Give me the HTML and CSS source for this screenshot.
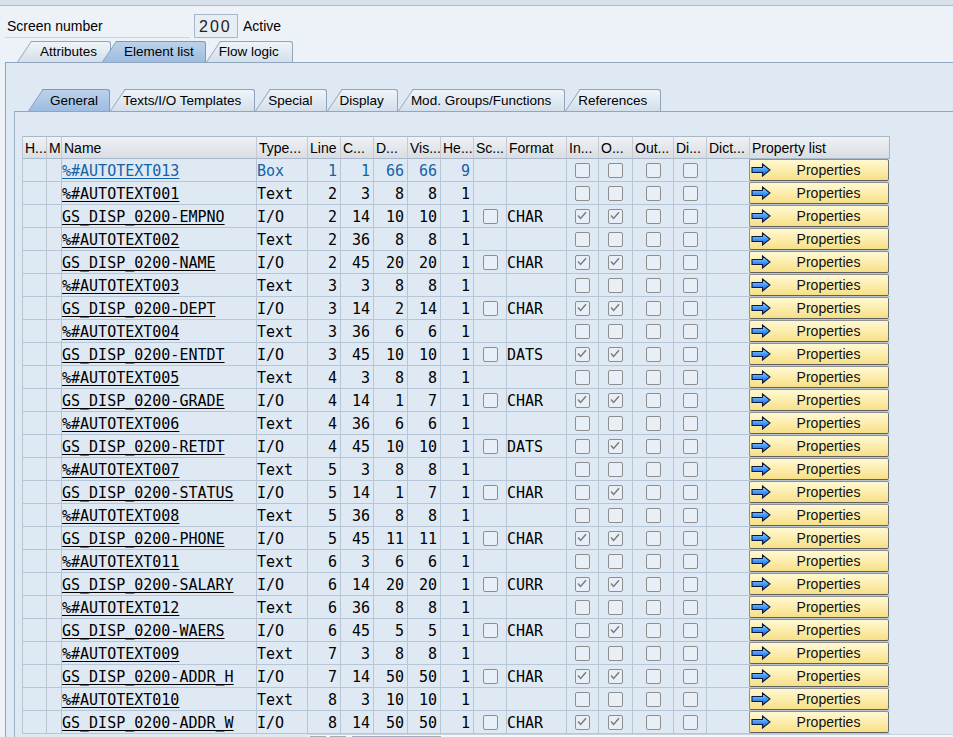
FILE: index.html
```html
<!DOCTYPE html>
<html lang="en">
<head>
<meta charset="utf-8">
<title>Screen 200 - Element list</title>
<link rel="stylesheet" href="styles.css">
</head>
<body>
<svg class="defs" width="0" height="0" aria-hidden="true">
  <defs>
    <linearGradient id="arrfill" x1="0" y1="0" x2="0" y2="1">
      <stop offset="0" stop-color="#bfe4ff"/>
      <stop offset="0.45" stop-color="#4aa0ff"/>
      <stop offset="1" stop-color="#1556d0"/>
    </linearGradient>
    <symbol id="arr" viewBox="0 0 20 14">
      <path d="M1 4.5 H11.5 V1 L19 7 L11.5 13 V9.5 H1 Z" fill="url(#arrfill)" stroke="#0b1a3a" stroke-width="1.1" stroke-linejoin="miter"/>
    </symbol>
  </defs>
</svg>

<div class="topbar"></div>

<div class="screen-row">
  <span class="label">Screen number</span>
  <span class="field">200</span>
  <span class="status">Active</span>
</div>

<div class="tabs main-tabs">
  <div class="tab">Attributes</div>
  <div class="tab sel">Element list</div>
  <div class="tab">Flow logic</div>
</div>

<div class="panel outer">
  <div class="tabs inner-tabs">
    <div class="tab sel">General</div>
    <div class="tab">Texts/I/O Templates</div>
    <div class="tab">Special</div>
    <div class="tab">Display</div>
    <div class="tab">Mod. Groups/Functions</div>
    <div class="tab">References</div>
  </div>

  <div class="panel inner">
    <div class="grid">
      <div class="row head">
        <div class="c">H...</div><div class="c">M</div><div class="c">Name</div><div class="c">Type...</div>
        <div class="c">Line</div><div class="c">C...</div><div class="c">D...</div><div class="c">Vis...</div>
        <div class="c">He...</div><div class="c">Sc...</div><div class="c">Format</div><div class="c">In...</div>
        <div class="c">O...</div><div class="c">Out...</div><div class="c">Di...</div><div class="c">Dict...</div>
        <div class="c">Property list</div>
      </div>

      <!-- 1 -->
      <div class="row blue">
        <div class="c"></div><div class="c"></div><div class="c mono"><span class="lnk">%#AUTOTEXT013</span></div><div class="c mono">Box</div>
        <div class="c num">1</div><div class="c num">1</div><div class="c num">66</div><div class="c num">66</div><div class="c num">9</div>
        <div class="c"></div><div class="c mono"></div>
        <div class="c ck"><i class="cb"></i></div><div class="c ck"><i class="cb"></i></div><div class="c ck"><i class="cb"></i></div><div class="c ck"><i class="cb"></i></div>
        <div class="c"></div>
        <div class="c prop"><div class="btn"><svg class="arrow"><use href="#arr"/></svg><span>Properties</span></div></div>
      </div>
      <!-- 2 -->
      <div class="row">
        <div class="c"></div><div class="c"></div><div class="c mono"><span class="lnk">%#AUTOTEXT001</span></div><div class="c mono">Text</div>
        <div class="c num">2</div><div class="c num">3</div><div class="c num">8</div><div class="c num">8</div><div class="c num">1</div>
        <div class="c"></div><div class="c mono"></div>
        <div class="c ck"><i class="cb"></i></div><div class="c ck"><i class="cb"></i></div><div class="c ck"><i class="cb"></i></div><div class="c ck"><i class="cb"></i></div>
        <div class="c"></div>
        <div class="c prop"><div class="btn"><svg class="arrow"><use href="#arr"/></svg><span>Properties</span></div></div>
      </div>
      <!-- 3 -->
      <div class="row">
        <div class="c"></div><div class="c"></div><div class="c mono"><span class="lnk">GS_DISP_0200-EMPNO</span></div><div class="c mono">I/O</div>
        <div class="c num">2</div><div class="c num">14</div><div class="c num">10</div><div class="c num">10</div><div class="c num">1</div>
        <div class="c ck"><i class="cb"></i></div><div class="c mono">CHAR</div>
        <div class="c ck"><i class="cb"><svg viewBox="0 0 13 13"><path d="M2 5.5 4.6 8.4 10 2.3"/></svg></i></div><div class="c ck"><i class="cb"><svg viewBox="0 0 13 13"><path d="M2 5.5 4.6 8.4 10 2.3"/></svg></i></div><div class="c ck"><i class="cb"></i></div><div class="c ck"><i class="cb"></i></div>
        <div class="c"></div>
        <div class="c prop"><div class="btn"><svg class="arrow"><use href="#arr"/></svg><span>Properties</span></div></div>
      </div>
      <!-- 4 -->
      <div class="row">
        <div class="c"></div><div class="c"></div><div class="c mono"><span class="lnk">%#AUTOTEXT002</span></div><div class="c mono">Text</div>
        <div class="c num">2</div><div class="c num">36</div><div class="c num">8</div><div class="c num">8</div><div class="c num">1</div>
        <div class="c"></div><div class="c mono"></div>
        <div class="c ck"><i class="cb"></i></div><div class="c ck"><i class="cb"></i></div><div class="c ck"><i class="cb"></i></div><div class="c ck"><i class="cb"></i></div>
        <div class="c"></div>
        <div class="c prop"><div class="btn"><svg class="arrow"><use href="#arr"/></svg><span>Properties</span></div></div>
      </div>
      <!-- 5 -->
      <div class="row">
        <div class="c"></div><div class="c"></div><div class="c mono"><span class="lnk">GS_DISP_0200-NAME</span></div><div class="c mono">I/O</div>
        <div class="c num">2</div><div class="c num">45</div><div class="c num">20</div><div class="c num">20</div><div class="c num">1</div>
        <div class="c ck"><i class="cb"></i></div><div class="c mono">CHAR</div>
        <div class="c ck"><i class="cb"><svg viewBox="0 0 13 13"><path d="M2 5.5 4.6 8.4 10 2.3"/></svg></i></div><div class="c ck"><i class="cb"><svg viewBox="0 0 13 13"><path d="M2 5.5 4.6 8.4 10 2.3"/></svg></i></div><div class="c ck"><i class="cb"></i></div><div class="c ck"><i class="cb"></i></div>
        <div class="c"></div>
        <div class="c prop"><div class="btn"><svg class="arrow"><use href="#arr"/></svg><span>Properties</span></div></div>
      </div>
      <!-- 6 -->
      <div class="row">
        <div class="c"></div><div class="c"></div><div class="c mono"><span class="lnk">%#AUTOTEXT003</span></div><div class="c mono">Text</div>
        <div class="c num">3</div><div class="c num">3</div><div class="c num">8</div><div class="c num">8</div><div class="c num">1</div>
        <div class="c"></div><div class="c mono"></div>
        <div class="c ck"><i class="cb"></i></div><div class="c ck"><i class="cb"></i></div><div class="c ck"><i class="cb"></i></div><div class="c ck"><i class="cb"></i></div>
        <div class="c"></div>
        <div class="c prop"><div class="btn"><svg class="arrow"><use href="#arr"/></svg><span>Properties</span></div></div>
      </div>
      <!-- 7 -->
      <div class="row">
        <div class="c"></div><div class="c"></div><div class="c mono"><span class="lnk">GS_DISP_0200-DEPT</span></div><div class="c mono">I/O</div>
        <div class="c num">3</div><div class="c num">14</div><div class="c num">2</div><div class="c num">14</div><div class="c num">1</div>
        <div class="c ck"><i class="cb"></i></div><div class="c mono">CHAR</div>
        <div class="c ck"><i class="cb"><svg viewBox="0 0 13 13"><path d="M2 5.5 4.6 8.4 10 2.3"/></svg></i></div><div class="c ck"><i class="cb"><svg viewBox="0 0 13 13"><path d="M2 5.5 4.6 8.4 10 2.3"/></svg></i></div><div class="c ck"><i class="cb"></i></div><div class="c ck"><i class="cb"></i></div>
        <div class="c"></div>
        <div class="c prop"><div class="btn"><svg class="arrow"><use href="#arr"/></svg><span>Properties</span></div></div>
      </div>
      <!-- 8 -->
      <div class="row">
        <div class="c"></div><div class="c"></div><div class="c mono"><span class="lnk">%#AUTOTEXT004</span></div><div class="c mono">Text</div>
        <div class="c num">3</div><div class="c num">36</div><div class="c num">6</div><div class="c num">6</div><div class="c num">1</div>
        <div class="c"></div><div class="c mono"></div>
        <div class="c ck"><i class="cb"></i></div><div class="c ck"><i class="cb"></i></div><div class="c ck"><i class="cb"></i></div><div class="c ck"><i class="cb"></i></div>
        <div class="c"></div>
        <div class="c prop"><div class="btn"><svg class="arrow"><use href="#arr"/></svg><span>Properties</span></div></div>
      </div>
      <!-- 9 -->
      <div class="row">
        <div class="c"></div><div class="c"></div><div class="c mono"><span class="lnk">GS_DISP_0200-ENTDT</span></div><div class="c mono">I/O</div>
        <div class="c num">3</div><div class="c num">45</div><div class="c num">10</div><div class="c num">10</div><div class="c num">1</div>
        <div class="c ck"><i class="cb"></i></div><div class="c mono">DATS</div>
        <div class="c ck"><i class="cb"><svg viewBox="0 0 13 13"><path d="M2 5.5 4.6 8.4 10 2.3"/></svg></i></div><div class="c ck"><i class="cb"><svg viewBox="0 0 13 13"><path d="M2 5.5 4.6 8.4 10 2.3"/></svg></i></div><div class="c ck"><i class="cb"></i></div><div class="c ck"><i class="cb"></i></div>
        <div class="c"></div>
        <div class="c prop"><div class="btn"><svg class="arrow"><use href="#arr"/></svg><span>Properties</span></div></div>
      </div>
      <!-- 10 -->
      <div class="row">
        <div class="c"></div><div class="c"></div><div class="c mono"><span class="lnk">%#AUTOTEXT005</span></div><div class="c mono">Text</div>
        <div class="c num">4</div><div class="c num">3</div><div class="c num">8</div><div class="c num">8</div><div class="c num">1</div>
        <div class="c"></div><div class="c mono"></div>
        <div class="c ck"><i class="cb"></i></div><div class="c ck"><i class="cb"></i></div><div class="c ck"><i class="cb"></i></div><div class="c ck"><i class="cb"></i></div>
        <div class="c"></div>
        <div class="c prop"><div class="btn"><svg class="arrow"><use href="#arr"/></svg><span>Properties</span></div></div>
      </div>
      <!-- 11 -->
      <div class="row">
        <div class="c"></div><div class="c"></div><div class="c mono"><span class="lnk">GS_DISP_0200-GRADE</span></div><div class="c mono">I/O</div>
        <div class="c num">4</div><div class="c num">14</div><div class="c num">1</div><div class="c num">7</div><div class="c num">1</div>
        <div class="c ck"><i class="cb"></i></div><div class="c mono">CHAR</div>
        <div class="c ck"><i class="cb"><svg viewBox="0 0 13 13"><path d="M2 5.5 4.6 8.4 10 2.3"/></svg></i></div><div class="c ck"><i class="cb"><svg viewBox="0 0 13 13"><path d="M2 5.5 4.6 8.4 10 2.3"/></svg></i></div><div class="c ck"><i class="cb"></i></div><div class="c ck"><i class="cb"></i></div>
        <div class="c"></div>
        <div class="c prop"><div class="btn"><svg class="arrow"><use href="#arr"/></svg><span>Properties</span></div></div>
      </div>
      <!-- 12 -->
      <div class="row">
        <div class="c"></div><div class="c"></div><div class="c mono"><span class="lnk">%#AUTOTEXT006</span></div><div class="c mono">Text</div>
        <div class="c num">4</div><div class="c num">36</div><div class="c num">6</div><div class="c num">6</div><div class="c num">1</div>
        <div class="c"></div><div class="c mono"></div>
        <div class="c ck"><i class="cb"></i></div><div class="c ck"><i class="cb"></i></div><div class="c ck"><i class="cb"></i></div><div class="c ck"><i class="cb"></i></div>
        <div class="c"></div>
        <div class="c prop"><div class="btn"><svg class="arrow"><use href="#arr"/></svg><span>Properties</span></div></div>
      </div>
      <!-- 13 -->
      <div class="row">
        <div class="c"></div><div class="c"></div><div class="c mono"><span class="lnk">GS_DISP_0200-RETDT</span></div><div class="c mono">I/O</div>
        <div class="c num">4</div><div class="c num">45</div><div class="c num">10</div><div class="c num">10</div><div class="c num">1</div>
        <div class="c ck"><i class="cb"></i></div><div class="c mono">DATS</div>
        <div class="c ck"><i class="cb"></i></div><div class="c ck"><i class="cb"><svg viewBox="0 0 13 13"><path d="M2 5.5 4.6 8.4 10 2.3"/></svg></i></div><div class="c ck"><i class="cb"></i></div><div class="c ck"><i class="cb"></i></div>
        <div class="c"></div>
        <div class="c prop"><div class="btn"><svg class="arrow"><use href="#arr"/></svg><span>Properties</span></div></div>
      </div>
      <!-- 14 -->
      <div class="row">
        <div class="c"></div><div class="c"></div><div class="c mono"><span class="lnk">%#AUTOTEXT007</span></div><div class="c mono">Text</div>
        <div class="c num">5</div><div class="c num">3</div><div class="c num">8</div><div class="c num">8</div><div class="c num">1</div>
        <div class="c"></div><div class="c mono"></div>
        <div class="c ck"><i class="cb"></i></div><div class="c ck"><i class="cb"></i></div><div class="c ck"><i class="cb"></i></div><div class="c ck"><i class="cb"></i></div>
        <div class="c"></div>
        <div class="c prop"><div class="btn"><svg class="arrow"><use href="#arr"/></svg><span>Properties</span></div></div>
      </div>
      <!-- 15 -->
      <div class="row">
        <div class="c"></div><div class="c"></div><div class="c mono"><span class="lnk">GS_DISP_0200-STATUS</span></div><div class="c mono">I/O</div>
        <div class="c num">5</div><div class="c num">14</div><div class="c num">1</div><div class="c num">7</div><div class="c num">1</div>
        <div class="c ck"><i class="cb"></i></div><div class="c mono">CHAR</div>
        <div class="c ck"><i class="cb"></i></div><div class="c ck"><i class="cb"><svg viewBox="0 0 13 13"><path d="M2 5.5 4.6 8.4 10 2.3"/></svg></i></div><div class="c ck"><i class="cb"></i></div><div class="c ck"><i class="cb"></i></div>
        <div class="c"></div>
        <div class="c prop"><div class="btn"><svg class="arrow"><use href="#arr"/></svg><span>Properties</span></div></div>
      </div>
      <!-- 16 -->
      <div class="row">
        <div class="c"></div><div class="c"></div><div class="c mono"><span class="lnk">%#AUTOTEXT008</span></div><div class="c mono">Text</div>
        <div class="c num">5</div><div class="c num">36</div><div class="c num">8</div><div class="c num">8</div><div class="c num">1</div>
        <div class="c"></div><div class="c mono"></div>
        <div class="c ck"><i class="cb"></i></div><div class="c ck"><i class="cb"></i></div><div class="c ck"><i class="cb"></i></div><div class="c ck"><i class="cb"></i></div>
        <div class="c"></div>
        <div class="c prop"><div class="btn"><svg class="arrow"><use href="#arr"/></svg><span>Properties</span></div></div>
      </div>
      <!-- 17 -->
      <div class="row">
        <div class="c"></div><div class="c"></div><div class="c mono"><span class="lnk">GS_DISP_0200-PHONE</span></div><div class="c mono">I/O</div>
        <div class="c num">5</div><div class="c num">45</div><div class="c num">11</div><div class="c num">11</div><div class="c num">1</div>
        <div class="c ck"><i class="cb"></i></div><div class="c mono">CHAR</div>
        <div class="c ck"><i class="cb"><svg viewBox="0 0 13 13"><path d="M2 5.5 4.6 8.4 10 2.3"/></svg></i></div><div class="c ck"><i class="cb"><svg viewBox="0 0 13 13"><path d="M2 5.5 4.6 8.4 10 2.3"/></svg></i></div><div class="c ck"><i class="cb"></i></div><div class="c ck"><i class="cb"></i></div>
        <div class="c"></div>
        <div class="c prop"><div class="btn"><svg class="arrow"><use href="#arr"/></svg><span>Properties</span></div></div>
      </div>
      <!-- 18 -->
      <div class="row">
        <div class="c"></div><div class="c"></div><div class="c mono"><span class="lnk">%#AUTOTEXT011</span></div><div class="c mono">Text</div>
        <div class="c num">6</div><div class="c num">3</div><div class="c num">6</div><div class="c num">6</div><div class="c num">1</div>
        <div class="c"></div><div class="c mono"></div>
        <div class="c ck"><i class="cb"></i></div><div class="c ck"><i class="cb"></i></div><div class="c ck"><i class="cb"></i></div><div class="c ck"><i class="cb"></i></div>
        <div class="c"></div>
        <div class="c prop"><div class="btn"><svg class="arrow"><use href="#arr"/></svg><span>Properties</span></div></div>
      </div>
      <!-- 19 -->
      <div class="row">
        <div class="c"></div><div class="c"></div><div class="c mono"><span class="lnk">GS_DISP_0200-SALARY</span></div><div class="c mono">I/O</div>
        <div class="c num">6</div><div class="c num">14</div><div class="c num">20</div><div class="c num">20</div><div class="c num">1</div>
        <div class="c ck"><i class="cb"></i></div><div class="c mono">CURR</div>
        <div class="c ck"><i class="cb"><svg viewBox="0 0 13 13"><path d="M2 5.5 4.6 8.4 10 2.3"/></svg></i></div><div class="c ck"><i class="cb"><svg viewBox="0 0 13 13"><path d="M2 5.5 4.6 8.4 10 2.3"/></svg></i></div><div class="c ck"><i class="cb"></i></div><div class="c ck"><i class="cb"></i></div>
        <div class="c"></div>
        <div class="c prop"><div class="btn"><svg class="arrow"><use href="#arr"/></svg><span>Properties</span></div></div>
      </div>
      <!-- 20 -->
      <div class="row">
        <div class="c"></div><div class="c"></div><div class="c mono"><span class="lnk">%#AUTOTEXT012</span></div><div class="c mono">Text</div>
        <div class="c num">6</div><div class="c num">36</div><div class="c num">8</div><div class="c num">8</div><div class="c num">1</div>
        <div class="c"></div><div class="c mono"></div>
        <div class="c ck"><i class="cb"></i></div><div class="c ck"><i class="cb"></i></div><div class="c ck"><i class="cb"></i></div><div class="c ck"><i class="cb"></i></div>
        <div class="c"></div>
        <div class="c prop"><div class="btn"><svg class="arrow"><use href="#arr"/></svg><span>Properties</span></div></div>
      </div>
      <!-- 21 -->
      <div class="row">
        <div class="c"></div><div class="c"></div><div class="c mono"><span class="lnk">GS_DISP_0200-WAERS</span></div><div class="c mono">I/O</div>
        <div class="c num">6</div><div class="c num">45</div><div class="c num">5</div><div class="c num">5</div><div class="c num">1</div>
        <div class="c ck"><i class="cb"></i></div><div class="c mono">CHAR</div>
        <div class="c ck"><i class="cb"></i></div><div class="c ck"><i class="cb"><svg viewBox="0 0 13 13"><path d="M2 5.5 4.6 8.4 10 2.3"/></svg></i></div><div class="c ck"><i class="cb"></i></div><div class="c ck"><i class="cb"></i></div>
        <div class="c"></div>
        <div class="c prop"><div class="btn"><svg class="arrow"><use href="#arr"/></svg><span>Properties</span></div></div>
      </div>
      <!-- 22 -->
      <div class="row">
        <div class="c"></div><div class="c"></div><div class="c mono"><span class="lnk">%#AUTOTEXT009</span></div><div class="c mono">Text</div>
        <div class="c num">7</div><div class="c num">3</div><div class="c num">8</div><div class="c num">8</div><div class="c num">1</div>
        <div class="c"></div><div class="c mono"></div>
        <div class="c ck"><i class="cb"></i></div><div class="c ck"><i class="cb"></i></div><div class="c ck"><i class="cb"></i></div><div class="c ck"><i class="cb"></i></div>
        <div class="c"></div>
        <div class="c prop"><div class="btn"><svg class="arrow"><use href="#arr"/></svg><span>Properties</span></div></div>
      </div>
      <!-- 23 -->
      <div class="row">
        <div class="c"></div><div class="c"></div><div class="c mono"><span class="lnk">GS_DISP_0200-ADDR_H</span></div><div class="c mono">I/O</div>
        <div class="c num">7</div><div class="c num">14</div><div class="c num">50</div><div class="c num">50</div><div class="c num">1</div>
        <div class="c ck"><i class="cb"></i></div><div class="c mono">CHAR</div>
        <div class="c ck"><i class="cb"><svg viewBox="0 0 13 13"><path d="M2 5.5 4.6 8.4 10 2.3"/></svg></i></div><div class="c ck"><i class="cb"><svg viewBox="0 0 13 13"><path d="M2 5.5 4.6 8.4 10 2.3"/></svg></i></div><div class="c ck"><i class="cb"></i></div><div class="c ck"><i class="cb"></i></div>
        <div class="c"></div>
        <div class="c prop"><div class="btn"><svg class="arrow"><use href="#arr"/></svg><span>Properties</span></div></div>
      </div>
      <!-- 24 -->
      <div class="row">
        <div class="c"></div><div class="c"></div><div class="c mono"><span class="lnk">%#AUTOTEXT010</span></div><div class="c mono">Text</div>
        <div class="c num">8</div><div class="c num">3</div><div class="c num">10</div><div class="c num">10</div><div class="c num">1</div>
        <div class="c"></div><div class="c mono"></div>
        <div class="c ck"><i class="cb"></i></div><div class="c ck"><i class="cb"></i></div><div class="c ck"><i class="cb"></i></div><div class="c ck"><i class="cb"></i></div>
        <div class="c"></div>
        <div class="c prop"><div class="btn"><svg class="arrow"><use href="#arr"/></svg><span>Properties</span></div></div>
      </div>
      <!-- 25 -->
      <div class="row">
        <div class="c"></div><div class="c"></div><div class="c mono"><span class="lnk">GS_DISP_0200-ADDR_W</span></div><div class="c mono">I/O</div>
        <div class="c num">8</div><div class="c num">14</div><div class="c num">50</div><div class="c num">50</div><div class="c num">1</div>
        <div class="c ck"><i class="cb"></i></div><div class="c mono">CHAR</div>
        <div class="c ck"><i class="cb"><svg viewBox="0 0 13 13"><path d="M2 5.5 4.6 8.4 10 2.3"/></svg></i></div><div class="c ck"><i class="cb"><svg viewBox="0 0 13 13"><path d="M2 5.5 4.6 8.4 10 2.3"/></svg></i></div><div class="c ck"><i class="cb"></i></div><div class="c ck"><i class="cb"></i></div>
        <div class="c"></div>
        <div class="c prop"><div class="btn"><svg class="arrow"><use href="#arr"/></svg><span>Properties</span></div></div>
      </div>
    </div>

    <div class="toolbar">
      <span class="tb tb1"></span><span class="tb tb2"></span><span class="tb tb3"></span>
    </div>
  </div>
</div>
</body>
</html>
```

FILE: styles.css
```css
* { box-sizing: border-box; }

html, body {
  margin: 0;
  height: 100%;
}

body {
  background: #edf2f8;
  font-family: "Liberation Sans", Arial, sans-serif;
  font-size: 13.5px;
  color: #000;
  overflow: hidden;
}

.defs {
  position: absolute;
  width: 0;
  height: 0;
  overflow: hidden;
}

.topbar {
  height: 6px;
  background: #d9e2eb;
  border-bottom: 1px solid #aebdcc;
}

/* Screen number row */
.screen-row {
  display: flex;
  margin-top: 8px;
  height: 24px;
  font-size: 14px;
}

.label {
  margin-left: 5px;
  width: 185px;
  padding-left: 2px;
  line-height: 25px;
  border-bottom: 1px solid #cbd5df;
}

.field {
  margin-left: 4px;
  width: 44px;
  height: 24px;
  border: 1px solid #a9b6c3;
  background: #e6edf4;
  font-size: 16px;
  letter-spacing: 2px;
  padding-left: 4px;
  line-height: 23px;
  color: #222;
}

.status {
  margin-left: 5px;
  line-height: 25px;
}

/* Tabs */
.tabs {
  display: flex;
  height: 21px;
}

.main-tabs {
  margin-top: 3px;
  padding-left: 17px;
}

.inner-tabs {
  margin-top: 26px;
  padding-left: 31px;
  height: 22px;
}

.tab {
  position: relative;
  z-index: 0;
  height: 100%;
  line-height: 23px;
  padding: 0 14px 0 13px;
  white-space: nowrap;
  font-size: 13.5px;
  --bg: linear-gradient(#eff4f9, #d3dfeb);
  --bd: #8ea5bd;
}

.main-tabs .tab { line-height: 22px; }

.tab:first-child { padding-left: 23px; }

.tab.sel {
  padding-left: 22px;
  padding-right: 12px;
  margin-left: -9px;
  z-index: 1;
  --bg: linear-gradient(#bcd2eb, #9dbce0);
  --bd: #7d9aba;
}

.tab::before,
.tab::after {
  content: "";
  position: absolute;
  top: 0;
  bottom: 0;
  background: var(--bg);
  border-top: 1px solid var(--bd);
  z-index: -1;
}

.tab::before {
  left: 0;
  width: 40px;
  border-left: 1px solid var(--bd);
  transform-origin: 0 100%;
  transform: skewX(-34deg);
}

.tab::after {
  left: 15px;
  right: 0;
  border-right: 1px solid var(--bd);
  border-top-right-radius: 3px;
}

/* Panels */
.outer {
  margin-left: 5px;
  border-left: 1px solid #8fa6be;
  border-top: 1px solid #8fa6be;
  background: #dfe9f4;
  min-height: 700px;
}

.inner {
  margin-left: 8px;
  border-left: 1px solid #9ab0c6;
  border-top: 1px solid #8fa6be;
  padding: 24px 0 0 7px;
  min-height: 640px;
}

/* Grid table */
.grid {
  width: 868px;
  border-left: 1px solid #b6c6d6;
}

.row {
  display: grid;
  grid-template-columns: 24px 15px 195px 51px 33px 33px 34px 33px 33px 33px 60px 32px 34px 41px 33px 43px 140px;
}

.c {
  height: 23px;
  border-right: 1px solid #b6c6d6;
  border-bottom: 1px solid #b6c6d6;
  display: flex;
  align-items: center;
  overflow: hidden;
  white-space: nowrap;
}

.head .c {
  background: linear-gradient(#f0f2f4, #d8dde3);
  border-top: 1px solid #a9b8c8;
  border-right-color: #c3cad2;
  border-bottom-color: #a9b8c8;
  padding-left: 2px;
  padding-top: 1px;
  font-size: 14px;
}

.head .c:last-child { border-right-color: #a9b8c8; }

.mono,
.num {
  font-family: "DejaVu Sans Mono", "Liberation Mono", monospace;
  font-size: 15px;
  padding-top: 1px;
}

.mono { padding-left: 0; }

.num {
  justify-content: flex-end;
  padding-right: 3px;
}

.lnk {
  text-decoration: underline;
  text-decoration-thickness: 1px;
  text-underline-offset: 2px;
}

.blue { color: #1463a6; }

/* checkboxes */
.ck { justify-content: center; }

.cb {
  display: block;
  width: 15px;
  height: 15px;
  border: 1px solid #8e8e8e;
  border-radius: 2px;
  background: #e8eff6;
}

.cb svg {
  display: block;
  width: 13px;
  height: 13px;
}

.cb path {
  fill: none;
  stroke: #7b7b7b;
  stroke-width: 1.5;
}

/* property button */
.prop {
  border-right: none;
  overflow: visible;
  align-items: flex-start;
  padding-top: 0;
}

.btn {
  display: flex;
  align-items: center;
  width: 140px;
  height: 22px;
  margin-left: -1px;
  border: 1px solid #8f8f8f;
  border-bottom-color: #5f5f5f;
  border-right-color: #6f6f6f;
  border-radius: 2px;
  background: linear-gradient(#fff8d2, #fcecaa 55%, #f6df86);
  color: #111;
  font-size: 14px;
}

.arrow {
  width: 20px;
  height: 14px;
  margin-left: 1px;
  flex: none;
}

.btn span {
  flex: 1;
  text-align: center;
  padding-right: 2px;
}

/* bottom toolbar strip */
.toolbar {
  margin-left: 286px;
  height: 20px;
  background: #f4f7fa;
  border-top: 1px solid #c8d2dc;
  display: flex;
}

.tb {
  height: 16px;
  margin-top: 1px;
  border: 1px solid #a0acb8;
  background: #fff;
}

.tb1 { margin-left: 2px; width: 16px; }
.tb2 { margin-left: 4px; width: 16px; }
.tb3 { margin-left: 6px; width: 89px; }
```
